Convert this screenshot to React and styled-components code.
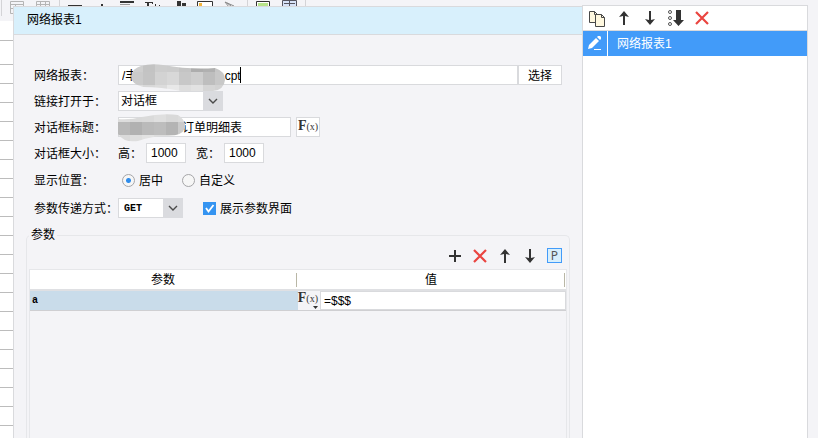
import React, { useState } from "react";
import styled, { createGlobalStyle, css } from "styled-components";

const line = "#d9dadd";
const softLine = "#e6e7ea";
const panel = "#f4f4f7";
const dark = "#333333";
const blue = "#429bf9";

const pathTiles = [
  ["#cfcfcf", "#c3c3c3", "#cdcdcd", "#cccccc", "#c4c4c4", "#adadad", "#b0b0b0", "#c6c6c6"],
  ["#cbcbcb", "#c4c4c4", "#d3d3d3", "#d8d8d8", "#c8c8c8", "#cecece", "#bebebe", "#c8c8c8"],
  ["#dddddd", "#d8d8d8", "#dcdcdc", "#e8e8e8", "#dedede", "#e2e2e2", "#d5d5d5", "#d2d2d2"],
];

const titleTiles = [
  ["#dddddd", "#d9d9d9", "#dadada", "#dfdfdf", "#d9d9d9", "#dcdcdc"],
  ["#b9b9b9", "#b1b1b1", "#bababa", "#bdbdbd", "#b4b4b4", "#cbcbcb"],
  ["#dadada", "#dedede", "#e2e2e2", "#dddddd", "#dddddd", "#dedede"],
];

const wide = (count) => "\u3000".repeat(count);

function Arrow({ down }) {
  return (
    <svg width="14" height="14" viewBox="0 0 14 14">
      <g transform={down ? "rotate(180 7 7)" : undefined} fill={dark}>
        <path d="M7 0 L12 6 L8 5 V14 H6 V5 L2 6 Z" />
      </g>
    </svg>
  );
}

function Cross() {
  return (
    <svg width="14" height="14" viewBox="0 0 14 14">
      <path d="M1 1 L13 13 M13 1 L1 13" stroke="#ea4540" strokeWidth="2.2" />
    </svg>
  );
}

function Plus() {
  return (
    <svg width="14" height="14" viewBox="0 0 14 14">
      <path d="M7 1 V13 M1 7 H13" stroke={dark} strokeWidth="2" />
    </svg>
  );
}

function Copy() {
  return (
    <svg width="18" height="17" viewBox="0 0 18 17">
      <g fill="#fff8df" stroke="#484848">
        <path d="M0.5 1.5 H5.5 L8.5 4.5 V12.5 H0.5 Z" />
        <path d="M5.5 1.5 V4.5 H8.5" fill="none" />
        <path d="M6.5 4.5 H12.5 L15.5 7.5 V16.5 H6.5 Z" />
        <path d="M12.5 4.5 V7.5 H15.5" fill="none" />
      </g>
    </svg>
  );
}

function SortDown() {
  return (
    <svg width="16" height="16" viewBox="0 0 16 16">
      <g fill="none" stroke="#555">
        <circle cx="2" cy="2" r="1.5" />
        <circle cx="2" cy="8" r="1.5" />
        <circle cx="2" cy="14" r="1.5" />
      </g>
      <path d="M8 0 H13 V10 H16 L10.5 16 L5 10 H8 Z" fill={dark} />
    </svg>
  );
}

function Pencil() {
  return (
    <svg width="14" height="15" viewBox="0 0 14 15" fill="#fff">
      <path d="M0 13 L1 9 L8 2 L11 5 L4 12 Z" />
      <path d="M9 1 L10 0 H12 L13 1 V3 L12 4 Z" />
      <path d="M6 13 H13 V14 H6 Z" />
    </svg>
  );
}

function Chevron() {
  return (
    <svg width="10" height="6" viewBox="0 0 10 6">
      <path d="M1 1 L5 5 L9 1" fill="none" stroke="#4a4a4a" strokeWidth="1.4" />
    </svg>
  );
}

function ToolStrip() {
  return (
    <svg width="310" height="21" viewBox="0 0 310 21">
      <path d="M1.5 0 V16 M59.5 0 V16 M247.5 0 V16 M305.5 0 V16" stroke="#d4d4d7" />
      <g fill="none" stroke="#b5b5b5">
        <path d="M10.5 1.5 H23.5 V13.5 H10.5 Z M10 4.5 H24 M15.5 4 V13 M10 8.5 H24" />
        <path d="M36.5 1.5 H49.5 V13.5 H36.5 Z M36 4.5 H50 M40.5 1 V13 M45.5 1 V13" />
      </g>
      <path d="M68 6 H82 M101 5 H103 M120 2 H134" stroke={dark} strokeWidth="2" />
      <path d="M120 4.5 H130" stroke="#999" />
      <path d="M145 2.5 H153 M147.5 2 V7 M148.5 2 V7 M152.5 2 V4 M155.5 4 V7 M159.5 5 V7" stroke={dark} />
      <path d="M177 1 H181 V7 H177 Z M182 3 H186 V7 H182 Z" fill={dark} />
      <path d="M197.5 1.5 H212.5 V10 H197.5 Z" fill="#fff" stroke={dark} />
      <path d="M199 3 H202 V6 H199 Z" fill="#f3b43c" />
      <path d="M225 2 L234 6 M225 2 L229 7 M227 3 L231 6" fill="none" stroke="#8a8a8a" />
      <path d="M256.5 1.5 H269.5 V10 H256.5 Z" fill="#fff" stroke={dark} />
      <path d="M258 3 H268 V9 H258 Z" fill="#b7e48a" />
      <path d="M282.5 0.5 H296.5 V10 H282.5 Z M289.5 1 V10 M284 3.5 H295" fill="#d7e3f8" stroke="#55555f" />
    </svg>
  );
}

// grey tiles clipped to a rounded brush stroke
function Mosaic({ id, width, tiles, shape }) {
  return (
    <svg width={width} height="28" viewBox={`0 0 ${width} 28`}>
      <clipPath id={id}>
        <path d={shape} />
      </clipPath>
      <g clipPath={`url(#${id})`}>
        {tiles.map((row, r) =>
          row.map((shade, c) => (
            <rect key={`${r}-${c}`} x={c * 12} y={r * 13 - 5} width="12" height="13" fill={shade} />
          ))
        )}
      </g>
    </svg>
  );
}

function Formula() {
  return (
    <FormulaText>
      F<small>(x)</small>
    </FormulaText>
  );
}

function Dropdown({ id, width, mono, children }) {
  return (
    <SelectWrap $width={width}>
      <Select id={id} $mono={mono}>
        {children}
      </Select>
      <SelectArrow>
        <Chevron />
      </SelectArrow>
    </SelectWrap>
  );
}

function ReportForm() {
  const [position, setPosition] = useState("center");
  const [showPanel, setShowPanel] = useState(true);

  return (
    <Form>
      <Row>
        <Label htmlFor="report">网络报表：</Label>
        <Field>
          <TextInput id="report" defaultValue={`/丰${wide(7)} cpt`} />
          <Smudge $left={12} $top={-2}>
            <Mosaic
              id="path-smudge"
              width={94}
              tiles={pathTiles}
              shape="M10 2 Q20 -1 32 1 Q60 6 84 4 Q94 7 94 16 Q93 26 82 27 H50 Q30 23 12 23 Q0 20 0 12 Q2 4 10 2 Z"
            />
          </Smudge>
          <Caret />
        </Field>
        <PickButton type="button">选择</PickButton>
      </Row>
      <Row>
        <Label htmlFor="target">链接打开于：</Label>
        <Dropdown id="target" width={105}>
          <option>对话框</option>
        </Dropdown>
      </Row>
      <Row>
        <Label htmlFor="title">对话框标题：</Label>
        <Field $width={173}>
          <TextInput id="title" defaultValue={`${wide(5)}订单明细表`} />
          <Smudge $left={-1} $top={-4}>
            <Mosaic
              id="title-smudge"
              width={68}
              tiles={titleTiles}
              shape="M0 5 Q12 6 24 3 Q44 -1 60 1 Q68 6 67 14 Q64 22 50 22 Q34 22 20 27 Q6 29 0 20 Z"
            />
          </Smudge>
        </Field>
        <FormulaButton type="button" aria-label="F(x)">
          <Formula />
        </FormulaButton>
      </Row>
      <Row>
        <Label as="span">对话框大小：</Label>
        <SizeLabel htmlFor="height">高：</SizeLabel>
        <Field $width={40}>
          <TextInput id="height" defaultValue="1000" $inset />
        </Field>
        <SizeLabel htmlFor="width" $next>
          宽：
        </SizeLabel>
        <Field $width={40}>
          <TextInput id="width" defaultValue="1000" $inset />
        </Field>
      </Row>
      <Row $tall>
        <Label as="span">显示位置：</Label>
        <Choices>
          <Choice>
            <Radio
              name="position"
              checked={position === "center"}
              onChange={() => setPosition("center")}
            />
            <Caption>居中</Caption>
          </Choice>
          <Choice>
            <Radio
              name="position"
              checked={position === "custom"}
              onChange={() => setPosition("custom")}
            />
            <Caption>自定义</Caption>
          </Choice>
        </Choices>
      </Row>
      <Row $tall>
        <Label htmlFor="method">参数传递方式：</Label>
        <Dropdown id="method" width={65} mono>
          <option>GET</option>
        </Dropdown>
        <CheckLabel>
          <CheckBox checked={showPanel} onChange={() => setShowPanel(!showPanel)} />
          <svg width="13" height="13" viewBox="0 0 13 13">
            {showPanel && (
              <path d="M3 6 L5.5 9.5 L10.5 3" fill="none" stroke="#fff" strokeWidth="1.8" />
            )}
          </svg>
          <Caption>展示参数界面</Caption>
        </CheckLabel>
      </Row>
    </Form>
  );
}

function Parameters() {
  return (
    <Group>
      <legend>参数</legend>
      <GroupBody>
        <GroupTools>
          <IconButton type="button" aria-label="添加">
            <Plus />
          </IconButton>
          <IconButton type="button" aria-label="删除">
            <Cross />
          </IconButton>
          <IconButton type="button" aria-label="上移">
            <Arrow />
          </IconButton>
          <IconButton type="button" aria-label="下移">
            <Arrow down />
          </IconButton>
          <IconButton type="button">
            <Letter>P</Letter>
          </IconButton>
        </GroupTools>
        <TableBox>
          <Table>
            <thead>
              <tr>
                <th>
                  <HeadCell>参数</HeadCell>
                </th>
                <th>
                  <HeadCell>值</HeadCell>
                </th>
              </tr>
            </thead>
            <tbody>
              <tr>
                <NameCell>a</NameCell>
                <td>
                  <ValueCell>
                    <CellFormula type="button" aria-label="F(x)">
                      <Formula />
                      <svg width="5" height="3" viewBox="0 0 5 3">
                        <path d="M0 0 H5 L2.5 3 Z" fill={dark} />
                      </svg>
                    </CellFormula>
                    <ValueInput aria-label="值" defaultValue="=$$$" />
                  </ValueCell>
                </td>
              </tr>
            </tbody>
          </Table>
        </TableBox>
      </GroupBody>
    </Group>
  );
}

function ReportList() {
  return (
    <SidePanel>
      <SideTools>
        <IconButton type="button" aria-label="复制" $wide>
          <Copy />
        </IconButton>
        <IconButton type="button" aria-label="上移" $wide>
          <Arrow />
        </IconButton>
        <IconButton type="button" aria-label="下移" $wide>
          <Arrow down />
        </IconButton>
        <IconButton type="button" aria-label="排序" $wide>
          <SortDown />
        </IconButton>
        <IconButton type="button" aria-label="删除" $wide>
          <Cross />
        </IconButton>
      </SideTools>
      <SideItem>
        <PencilCell>
          <Pencil />
        </PencilCell>
        <Caption>网络报表1</Caption>
      </SideItem>
    </SidePanel>
  );
}

function App() {
  return (
    <>
      <GlobalStyle />
      <Designer>
        <ToolBar>
          <ToolStrip />
        </ToolBar>
        <Sheet>
          <SheetRow $height={20} />
          <SheetRow $height={24} />
          {Array.from({ length: 60 }, (_, i) => (
            <SheetRow key={i} $height={19} />
          ))}
        </Sheet>
        <Overlay>
          <Dialog>
            <Title>网络报表1</Title>
            <ReportForm />
            <Parameters />
          </Dialog>
          <ReportList />
        </Overlay>
      </Designer>
    </>
  );
}

const GlobalStyle = createGlobalStyle`
  * {
    box-sizing: border-box;
  }
  body {
    margin: 0;
    color: #000;
    background-color: ${panel};
  }
  body, input, select, button {
    font-family: "Liberation Sans", "Noto Sans CJK SC", sans-serif;
    font-size: 12px;
  }
  svg {
    display: block;
    flex-shrink: 0;
  }
`;

const Designer = styled.div`
  position: relative;
  display: flex;
  flex-direction: column;
  height: 100vh;
  overflow: hidden;
`;

const ToolBar = styled.div`
  height: 21px;
  flex-shrink: 0;
  background-color: ${panel};
`;

const Sheet = styled.div`
  flex: 1;
  min-height: 0;
  overflow: hidden;
  margin-right: 11px;
  background-color: #fff;
`;

const SheetRow = styled.div`
  height: ${(props) => props.$height}px;
  border-bottom: 1px solid #bcbcbc;
`;

const Overlay = styled.div`
  position: absolute;
  inset: 0;
  display: flex;
  padding: 5px 10px 0 13px;
`;

const Dialog = styled.section`
  flex: 1;
  min-width: 0;
  display: flex;
  flex-direction: column;
  margin-top: 1px;
  border: 1px solid ${line};
  border-width: 1px 0 0 1px;
  background-color: ${panel};
`;

const Title = styled.h1`
  margin: 0;
  padding-left: 13px;
  height: 28px;
  line-height: 27px;
  font-size: 12px;
  font-weight: 400;
  background-color: #d8f0fc;
  border-bottom: 1px solid ${line};
`;

const Form = styled.form`
  display: flex;
  flex-direction: column;
  gap: 6px;
  padding: 30px 20px 0 20px;
`;

const Row = styled.div`
  display: flex;
  align-items: center;
  height: ${(props) => (props.$tall ? 22 : 20)}px;
`;

const Label = styled.label`
  width: 84px;
  flex-shrink: 0;
  padding-bottom: 2px;
  white-space: nowrap;
`;

const Field = styled.div`
  position: relative;
  height: 20px;
  border: 1px solid ${line};
  background-color: #fff;
  ${(props) =>
    props.$width
      ? css`
          width: ${props.$width}px;
        `
      : css`
          flex: 1;
          min-width: 0;
        `}
`;

const TextInput = styled.input`
  display: block;
  width: 100%;
  height: 18px;
  padding: 0 0 ${(props) => (props.$inset ? 0 : 2)}px ${(props) => (props.$inset ? 4 : 3)}px;
  border: none;
  outline: none;
  background: none;
`;

const Smudge = styled.div`
  position: absolute;
  left: ${(props) => props.$left}px;
  top: ${(props) => props.$top}px;
  z-index: 1;
  pointer-events: none;
`;

const Caret = styled.span`
  position: absolute;
  left: 121px;
  top: 1px;
  width: 1px;
  height: 16px;
  background-color: #000;
`;

const PickButton = styled.button`
  width: 44px;
  height: 20px;
  padding: 0 0 2px;
  border: 1px solid ${line};
  background-color: #fff;
`;

const SelectWrap = styled.div`
  position: relative;
  width: ${(props) => props.$width}px;
  height: 20px;
`;

const Select = styled.select`
  appearance: none;
  width: 100%;
  height: 20px;
  padding: 0 20px 0 2px;
  border: 1px solid ${line};
  border-radius: 0;
  background-color: #fff;
  color: #000;
  ${(props) =>
    props.$mono &&
    css`
      padding-left: 5px;
      font-family: "Liberation Mono", monospace;
      font-size: 10px;
      font-weight: 700;
    `}
`;

const SelectArrow = styled.span`
  position: absolute;
  right: 0;
  top: 0;
  width: 20px;
  height: 20px;
  display: flex;
  align-items: center;
  justify-content: center;
  background-color: #dadbdf;
  pointer-events: none;
`;

const FormulaText = styled.span`
  font-family: "Liberation Serif", serif;
  font-size: 14px;
  font-weight: 700;
  line-height: 14px;
  color: ${dark};
  small {
    font-size: 10px;
    font-weight: 400;
  }
`;

const FormulaButton = styled.button`
  width: 24px;
  height: 20px;
  margin-left: 5px;
  padding: 0 0 2px;
  border: 1px solid ${line};
  background-color: #fff;
`;

const SizeLabel = styled.label`
  width: 28px;
  margin-left: ${(props) => (props.$next ? 10 : 0)}px;
  padding-bottom: 2px;
  white-space: nowrap;
`;

const Choices = styled.div`
  display: flex;
  gap: 19px;
  padding-left: 4px;
`;

const Choice = styled.label`
  display: flex;
  align-items: center;
  gap: 4px;
`;

const Caption = styled.span`
  padding-bottom: 2px;
`;

const Radio = styled.input.attrs({ type: "radio" })`
  appearance: none;
  width: 13px;
  height: 13px;
  margin: 0;
  border: 1px solid #a5a5a8;
  border-radius: 50%;
  background-color: #f6f6f6;
  &:checked {
    background-image: radial-gradient(circle, #2f8ceb 2px, #f6f6f6 3px);
  }
`;

const CheckLabel = styled.label`
  display: flex;
  align-items: center;
  gap: 4px;
  margin-left: 20px;
  svg {
    background-color: #3594f1;
  }
`;

const CheckBox = styled.input.attrs({ type: "checkbox" })`
  position: absolute;
  opacity: 0;
`;

const Group = styled.fieldset`
  flex: 1;
  min-width: 0;
  min-height: 0;
  margin: 9px 12px 0 12px;
  padding: 0 2px;
  border: 1px solid ${softLine};
  border-bottom: none;
  border-radius: 5px 5px 0 0;
  legend {
    padding: 0 2px;
    line-height: 14px;
  }
`;

const GroupBody = styled.div`
  display: flex;
  flex-direction: column;
  height: 100%;
`;

const GroupTools = styled.div`
  display: flex;
  align-items: center;
  justify-content: flex-end;
  height: 27px;
`;

const IconButton = styled.button`
  display: flex;
  align-items: center;
  justify-content: center;
  width: ${(props) => (props.$wide ? 26 : 25)}px;
  height: 24px;
  padding: 0;
  border: none;
  background: none;
`;

const Letter = styled.span`
  width: 15px;
  height: 15px;
  line-height: 13px;
  border: 1px solid ${blue};
  background-color: #d8effc;
  color: #555;
  font-family: "Noto Sans", sans-serif;
`;

const TableBox = styled.div`
  flex: 1;
  border: 1px solid ${softLine};
  border-bottom: none;
`;

const Table = styled.table`
  width: 100%;
  table-layout: fixed;
  border-collapse: collapse;
  th, td {
    padding: 0;
    font-weight: 400;
  }
  thead tr {
    height: 20px;
    background-color: #fff;
    border-bottom: 2px solid #dfe0e3;
  }
  tbody tr {
    height: 20px;
    border-bottom: 1px solid #cfcfd2;
  }
`;

const HeadCell = styled.div`
  height: 14px;
  line-height: 15px;
  margin-right: 1px;
  border-right: 1px solid #b9b7a6;
`;

const NameCell = styled.td`
  background-color: #c9dcea;
  && {
    padding-left: 2px;
    font-weight: 700;
  }
  font-family: "Liberation Mono", monospace;
  font-size: 10px;
`;

const ValueCell = styled.div`
  display: flex;
`;

const CellFormula = styled.button`
  display: flex;
  flex-direction: column;
  align-items: flex-end;
  width: 22px;
  height: 19px;
  padding: 0 2px 0 0;
  border: none;
  background-color: ${panel};
`;

const ValueInput = styled.input`
  flex: 1;
  min-width: 0;
  height: 19px;
  padding: 0 3px;
  border: 1px solid ${line};
  outline: none;
  background-color: #fff;
`;

const SidePanel = styled.aside`
  width: 226px;
  flex-shrink: 0;
  border: 1px solid ${line};
  border-bottom: none;
  background-color: #fff;
`;

const SideTools = styled.div`
  display: flex;
  align-items: center;
  height: 25px;
  padding-left: 2px;
  border-bottom: 1px solid ${line};
`;

const SideItem = styled.div`
  display: flex;
  align-items: center;
  gap: 9px;
  height: 25px;
  color: #fff;
  background-color: ${blue};
`;

const PencilCell = styled.span`
  display: flex;
  align-items: center;
  justify-content: center;
  width: 25px;
  height: 25px;
  border-right: 1px solid #fff;
`;

export default App;
